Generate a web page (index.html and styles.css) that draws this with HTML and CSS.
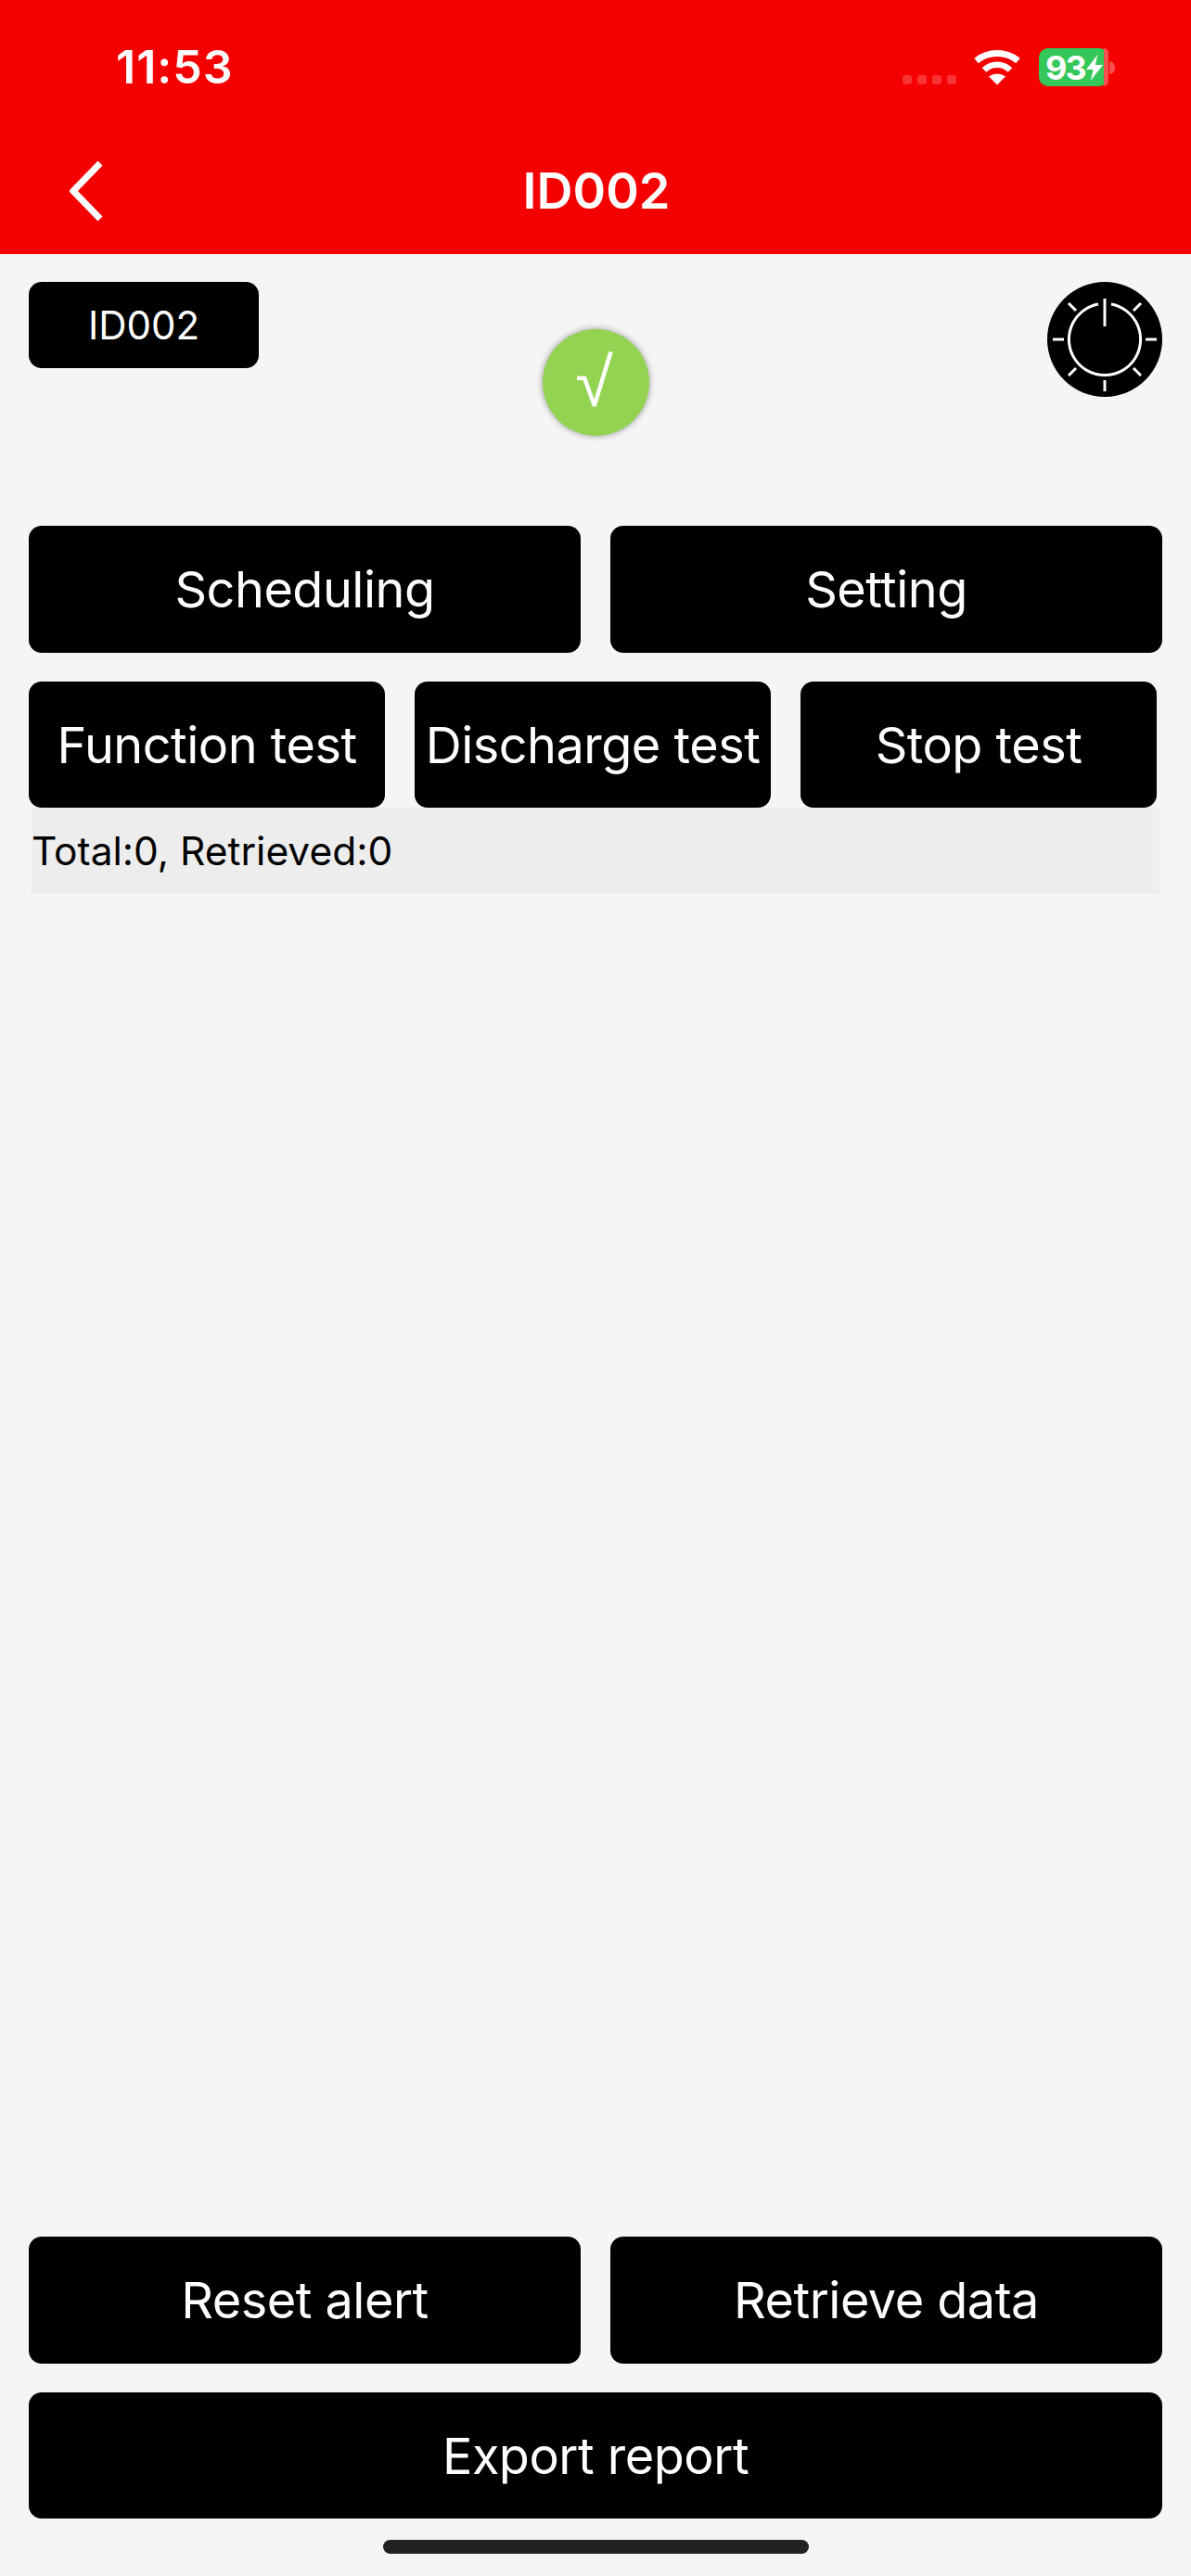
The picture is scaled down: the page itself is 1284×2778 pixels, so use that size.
FILE: index.html
```html
<!DOCTYPE html>
<html lang="en">
<head>
<meta charset="utf-8">
<title>ID002</title>
<link rel="stylesheet" href="styles.css">
</head>
<body>
<div class="app">
  <header class="header">
    <div class="status-bar">
      <span class="time">11:53</span>
      <div class="status-icons">
        <div class="signal"><i></i><i></i><i></i><i></i></div>
        <svg class="wifi" width="52" height="38" viewBox="0 0 52 38" aria-hidden="true">
          <path d="M3.5 11.5A36 36 0 0 1 48.5 11.5" fill="none" stroke="#fff" stroke-width="7"/>
          <path d="M12 21.5A20 20 0 0 1 40 21.5" fill="none" stroke="#fff" stroke-width="6.5"/>
          <path d="M26 37.5L17 28.5Q26 22.5 35 28.5Z" fill="#fff"/>
        </svg>
        <div class="battery">
          <div class="battery-body">
            <span class="battery-level">93</span>
            <svg class="bolt" width="18" height="28" viewBox="0 0 19 28" preserveAspectRatio="none" aria-hidden="true">
              <path d="M13 0L0 16H8L5 28L19 11H10.500Z" fill="#fff"/>
            </svg>
            <span class="battery-rest"></span>
          </div>
          <span class="battery-nub"></span>
        </div>
      </div>
    </div>
    <div class="nav-bar">
      <svg class="back" width="36" height="66" viewBox="0 0 36 66" aria-hidden="true">
        <path d="M33 3L4 33L33 63" fill="none" stroke="#fff" stroke-width="7"/>
      </svg>
      <h1 class="title">ID002</h1>
      <span></span>
    </div>
  </header>

  <main class="content">
    <div class="top-row">
      <div class="device-badge">ID002</div>
      <div class="ok-indicator">√</div>
      <svg class="power" width="124" height="124" viewBox="-62 -62 124 124" aria-hidden="true">
        <circle r="62" fill="#000"/>
        <g fill="none" stroke="#fff" stroke-width="3">
          <path d="M-7 -38A38.600 38.600 0 1 0 7 -38"/>
          <path d="M0 -44V-14"/>
          <path d="M44 0H56M-44 0H-56M0 44V56"/>
          <path d="M31 -31L39 -39M-31 -31L-39 -39M31 31L39 39M-31 31L-39 39"/>
        </g>
      </svg>
    </div>

    <div class="btn-row two">
      <button class="btn">Scheduling</button>
      <button class="btn">Setting</button>
    </div>
    <div class="btn-row three">
      <button class="btn">Function test</button>
      <button class="btn">Discharge test</button>
      <button class="btn">Stop test</button>
    </div>
    <div class="summary">Total:0, Retrieved:0</div>

    <div class="spacer"></div>

    <div class="btn-row two">
      <button class="btn">Reset alert</button>
      <button class="btn">Retrieve data</button>
    </div>
    <div class="btn-row one">
      <button class="btn">Export report</button>
    </div>
    <div class="home-indicator"></div>
  </main>
</div>
</body>
</html>
```

FILE: styles.css
```css
* {
  box-sizing: border-box;
}

html,
body {
  margin: 0;
  padding: 0;
}

body {
  background: #f5f5f5;
  font-family: Inter, "Liberation Sans", sans-serif;
}

.app {
  width: 1284px;
  height: 2778px;
  display: flex;
  flex-direction: column;
  overflow: hidden;
}

/* Header */
.header {
  height: 274px;
  flex: none;
  background: #f50000;
  color: #fff;
}

.status-bar {
  height: 173px;
  padding: 52px 82px 0 125px;
  display: flex;
  justify-content: space-between;
  align-items: flex-start;
}

.time {
  font-size: 50px;
  font-weight: 600;
  line-height: 41px;
  letter-spacing: 1px;
}

.status-icons {
  display: flex;
  align-items: flex-start;
}

.signal {
  display: flex;
  gap: 6px;
  margin-top: 29px;
  margin-right: 18px;
}

.signal i {
  display: block;
  width: 10px;
  height: 10px;
  border-radius: 3px;
  background: rgba(255, 255, 255, 0.2);
}

.wifi {
  margin-top: 2px;
  margin-right: 19px;
}

.battery {
  display: flex;
  align-items: center;
}

.battery-body {
  width: 75px;
  height: 41px;
  border-radius: 10px;
  background: #34c759;
  display: flex;
  align-items: center;
  padding-left: 7px;
}

.battery-level {
  font-size: 36px;
  font-weight: 700;
  line-height: 36px;
  letter-spacing: -2px;
}

.bolt {
  margin-left: 1px;
  flex: none;
}

.battery-rest {
  align-self: stretch;
  flex: none;
  width: 5px;
  margin-left: auto;
  border-radius: 0 10px 10px 0;
  background: #f55050;
}

.battery-nub {
  width: 6px;
  height: 14px;
  margin-left: 1px;
  border-radius: 0 7px 7px 0;
  background: rgba(255, 255, 255, 0.3);
}

.nav-bar {
  height: 66px;
  padding: 0 73px 0 75px;
  display: grid;
  grid-template-columns: 1fr auto 1fr;
  align-items: center;
}

.back {
  display: block;
}

.title {
  margin: 0;
  font-size: 54px;
  font-weight: 600;
  line-height: 66px;
}

/* Content */
.content {
  flex: 1;
  padding: 30px 31px 24px;
  display: flex;
  flex-direction: column;
}

.top-row {
  height: 263px;
  flex: none;
  display: grid;
  grid-template-columns: 1fr auto 1fr;
  align-items: flex-start;
}

.device-badge {
  width: 248px;
  height: 93px;
  border-radius: 14px;
  background: #000;
  color: #fff;
  font-size: 42px;
  font-weight: 400;
  display: flex;
  align-items: center;
  justify-content: center;
}

.ok-indicator {
  width: 115px;
  height: 115px;
  margin-top: 51px;
  padding-right: 3px;
  border-radius: 50%;
  background: #94d352;
  box-shadow: 0 0 7px rgba(0, 0, 0, 0.4);
  color: #fff;
  font-family: "Liberation Sans", sans-serif;
  font-size: 74px;
  line-height: 115px;
  text-align: center;
}

.power {
  display: block;
  justify-self: end;
}

.btn-row {
  display: grid;
  flex: none;
}

.btn-row.two {
  grid-template-columns: 595px 595px;
  column-gap: 32px;
}

.btn-row.three {
  grid-template-columns: 384px 384px 384px;
  column-gap: 32px;
  margin-top: 31px;
}

.btn-row.one {
  grid-template-columns: 1222px;
  margin-top: 31px;
}

.btn {
  height: 137px;
  padding: 0;
  border: 0;
  border-radius: 14px;
  background: #000;
  color: #fff;
  font-family: inherit;
  font-size: 54px;
  font-weight: 400;
  letter-spacing: -0.5px;
  white-space: nowrap;
}

.btn-row.three .btn,
.btn-row.one .btn {
  height: 136px;
}

.summary {
  height: 93px;
  flex: none;
  margin: 0 3px;
  background: #ededed;
  color: #000;
  font-size: 42.5px;
  line-height: 93px;
}

.spacer {
  flex: 1;
}

.home-indicator {
  width: 459px;
  height: 15px;
  flex: none;
  margin: 23px auto 0;
  border-radius: 8px;
  background: #222;
}
```
